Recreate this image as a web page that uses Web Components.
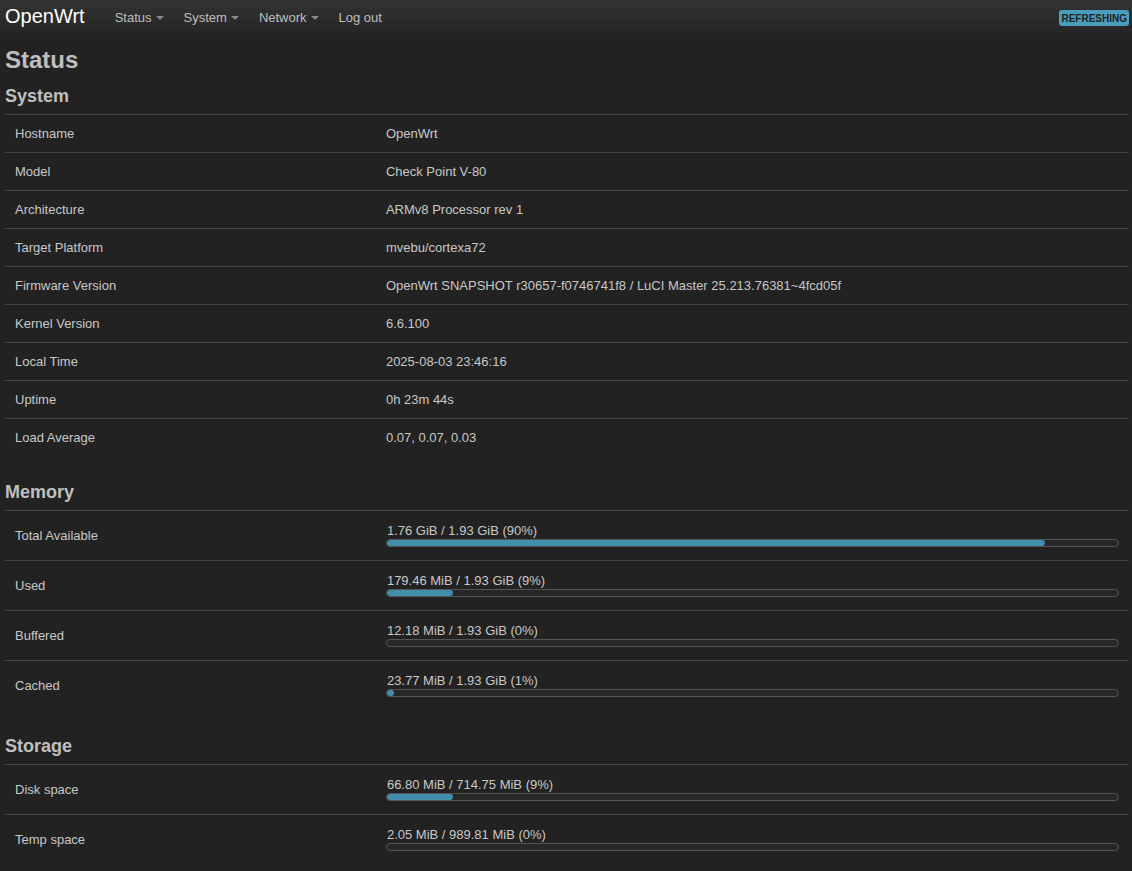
<!DOCTYPE html>
<html lang="en">
<head>
<meta charset="utf-8">
<meta name="viewport" content="width=device-width, initial-scale=1">
<title>OpenWrt - Status</title>
<style>
    body {
        margin: 0;
        background: #222;
        color: #c8c8c8;
        font: 13px/18px "Liberation Sans", Arial, sans-serif;
    }
</style>
</head>
<body>
<top-bar brand="OpenWrt">
    <nav-link href="#status" menu>Status</nav-link>
    <nav-link href="#system" menu>System</nav-link>
    <nav-link href="#network" menu>Network</nav-link>
    <nav-link href="#logout">Log out</nav-link>
    <poll-badge slot="indicator">Refreshing</poll-badge>
</top-bar>
<status-page></status-page>

<script>
class TopBar extends HTMLElement {

    constructor() {
        super();
        this.shadowDOM = this.attachShadow({mode: "open"});
    }

    connectedCallback() {
        this.shadowDOM.innerHTML = `
            <style>
                :host {
                    display: block;
                    background: linear-gradient(#333, #222);
                }
                header {
                    display: flex;
                    align-items: flex-start;
                    height: 42px;
                    padding: 0 3px 0 5px;
                }
                .brand {
                    color: #fff;
                    font-size: 20px;
                    line-height: 32px;
                    text-decoration: none;
                }
                nav {
                    display: flex;
                    flex: 1;
                    padding: 9px 20px 0;
                }
            </style>
            <header>
                <a class="brand" href="#">${this.getAttribute("brand")}</a>
                <nav><slot></slot></nav>
                <slot name="indicator"></slot>
            </header>`;
    }
}

class NavLink extends HTMLElement {

    constructor() {
        super();
        this.shadowDOM = this.attachShadow({mode: "open"});
    }

    connectedCallback() {
        this.shadowDOM.innerHTML = `
            <style>
                :host {
                    display: block;
                }
                a {
                    display: flex;
                    align-items: center;
                    padding: 0 10px;
                    color: #bfbfbf;
                    text-decoration: none;
                }
                :host([menu]) a::after {
                    content: "";
                    margin-left: 4px;
                    border: 4px solid transparent;
                    border-top-color: #888;
                    border-bottom: 0;
                }
            </style>
            <a href="${this.getAttribute("href")}"><slot></slot></a>`;
    }
}

class PollBadge extends HTMLElement {

    constructor() {
        super();
        this.shadowDOM = this.attachShadow({mode: "open"});
    }

    connectedCallback() {
        this.shadowDOM.innerHTML = `
            <style>
                :host {
                    display: block;
                    margin-top: 10px;
                }
                button {
                    display: block;
                    margin: 0;
                    padding: 1px 2px 0;
                    border: 0;
                    border-radius: 3px;
                    background: #4a9ebd;
                    color: #222;
                    font: bold 10px/15px "Liberation Sans", Arial, sans-serif;
                    text-transform: uppercase;
                    cursor: pointer;
                }
            </style>
            <button type="button"><slot></slot></button>`;
    }
}

class UsageBar extends HTMLElement {

    constructor() {
        super();
        this.shadowDOM = this.attachShadow({mode: "open"});
    }

    connectedCallback() {
        this.shadowDOM.innerHTML = `
            <style>
                :host {
                    display: block;
                }
                .caption {
                    padding-left: 1px;
                    line-height: 16px;
                }
                .track {
                    height: 6px;
                    border: 1px solid #555;
                    border-radius: 4px;
                    background: #272727;
                    overflow: hidden;
                }
                .fill {
                    height: 100%;
                    border-radius: 3px;
                    background: #438eaa;
                }
            </style>
            <div class="caption"><slot></slot></div>
            <div class="track">
                <div class="fill" style="width: ${this.getAttribute("percent")}%"></div>
            </div>`;
    }
}

class StatusSection extends HTMLElement {

    constructor() {
        super();
        this.shadowDOM = this.attachShadow({mode: "open"});
    }

    set section(section) {
        this._section = section;
        this.render();
    }

    renderValue(row) {
        if (row.percent === undefined) {
            return row.value;
        }
        return `<usage-bar percent="${row.percent}">${row.value} (${row.percent}%)</usage-bar>`;
    }

    render() {
        this.shadowDOM.innerHTML = `
            <style>
                :host {
                    display: block;
                    margin-bottom: 18px;
                }
                h3 {
                    margin: 0;
                    color: #bfbfbf;
                    font-size: 18px;
                    line-height: 36px;
                }
                table {
                    width: 100%;
                    table-layout: fixed;
                    border-spacing: 0;
                }
                th, td {
                    padding: 10px 10px 9px;
                    border-top: 1px solid #444;
                    font-weight: normal;
                    text-align: left;
                    vertical-align: middle;
                }
                th {
                    width: 33%;
                    box-sizing: border-box;
                }
                .usage td {
                    padding: 12px 10px 13px;
                }
            </style>
            <h3>${this._section.title}</h3>
            <table class="${this._section.usage ? "usage" : ""}">
                <tbody>
                    ${this._section.rows.map(row => `
                    <tr>
                        <th scope="row">${row.label}</th>
                        <td>${this.renderValue(row)}</td>
                    </tr>`).join("")}
                </tbody>
            </table>`;
    }
}

class StatusPage extends HTMLElement {

    constructor() {
        super();
        this.shadowDOM = this.attachShadow({mode: "open"});
    }

    connectedCallback() {
        this.shadowDOM.innerHTML = `
            <style>
                :host {
                    display: block;
                    padding: 0 3px 0 5px;
                }
                h2 {
                    margin: 0;
                    color: #bfbfbf;
                    font-size: 24px;
                    line-height: 36px;
                }
            </style>
            <main>
                <h2>Status</h2>
            </main>`;

        const main = this.shadowDOM.querySelector("main");
        sections.forEach(section => {
            const element = document.createElement("status-section");
            element.section = section;
            main.appendChild(element);
        });
    }
}

const sections = [
    {
        title: "System",
        rows: [
            {label: "Hostname", value: "OpenWrt"},
            {label: "Model", value: "Check Point V-80"},
            {label: "Architecture", value: "ARMv8 Processor rev 1"},
            {label: "Target Platform", value: "mvebu/cortexa72"},
            {label: "Firmware Version", value: "OpenWrt SNAPSHOT r30657-f0746741f8 / LuCI Master 25.213.76381~4fcd05f"},
            {label: "Kernel Version", value: "6.6.100"},
            {label: "Local Time", value: "2025-08-03 23:46:16"},
            {label: "Uptime", value: "0h 23m 44s"},
            {label: "Load Average", value: "0.07, 0.07, 0.03"}
        ]
    },
    {
        title: "Memory",
        usage: true,
        rows: [
            {label: "Total Available", value: "1.76 GiB / 1.93 GiB", percent: 90},
            {label: "Used", value: "179.46 MiB / 1.93 GiB", percent: 9},
            {label: "Buffered", value: "12.18 MiB / 1.93 GiB", percent: 0},
            {label: "Cached", value: "23.77 MiB / 1.93 GiB", percent: 1}
        ]
    },
    {
        title: "Storage",
        usage: true,
        rows: [
            {label: "Disk space", value: "66.80 MiB / 714.75 MiB", percent: 9},
            {label: "Temp space", value: "2.05 MiB / 989.81 MiB", percent: 0}
        ]
    }
];

customElements.define("top-bar", TopBar);
customElements.define("nav-link", NavLink);
customElements.define("poll-badge", PollBadge);
customElements.define("usage-bar", UsageBar);
customElements.define("status-section", StatusSection);
customElements.define("status-page", StatusPage);
</script>
</body>
</html>
